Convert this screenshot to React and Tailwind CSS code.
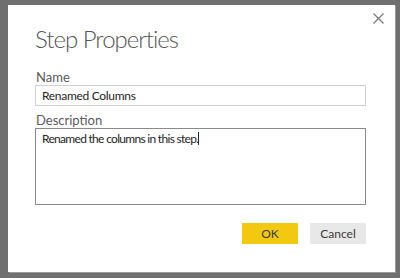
export default function App() {
    return (
        <div className="w-[400px] h-[278px] bg-[#6f6f6f] pt-[5px] pl-[8px] pr-[5px] pb-[6px]" style={{ fontFamily: 'Lato, "Noto Sans", sans-serif' }}>
            <div className="h-full bg-white flex flex-col pl-[27px] pr-[29px] pt-[13px] shadow-[1px_1px_0_#9a9a9a]">
                <div className="flex items-start justify-between">
                    <h1 className="text-[24px] leading-[32px] font-light tracking-[-1px] text-[#555] pt-[5px]">Step Properties</h1>
                    <svg width="11" height="11" viewBox="0 0 11 11" className="mt-[-5px] mr-[-18px]">
                        <path d="M0.5 0.5 L10.5 10.5 M10.5 0.5 L0.5 10.5" stroke="#7a7a7a" strokeWidth="1.3" />
                    </svg>
                </div>
                <label className="mt-[14px] text-[13px] leading-[16px] text-[#5a5a5a] pl-[1px]">Name</label>
                <div className="h-[21px] border border-[#cfcfcf] flex items-center pl-[6px] text-[12px] tracking-[-0.3px] text-[#252423]">Renamed Columns</div>
                <label className="mt-[6px] text-[13px] leading-[16px] text-[#5a5a5a] pl-[1px]">Description</label>
                <div className="h-[77px] border border-[#8a8a8a] pl-[6px] pt-[2px] text-[12px] leading-[16px] tracking-[-0.7px] text-[#252423]">
                    Renamed the columns in this step.<span className="inline-block w-px h-[13px] bg-[#222] align-[-2px]" />
                </div>
                <div className="mt-[18px] flex justify-end gap-[12px]">
                    <button className="w-[56px] h-[21px] bg-[#f2c811] text-[12px] text-[#3a3a3a]">OK</button>
                    <button className="w-[56px] h-[21px] bg-[#e8e8e8] text-[12px] text-[#3a3a3a]">Cancel</button>
                </div>
            </div>
        </div>
    );
}
